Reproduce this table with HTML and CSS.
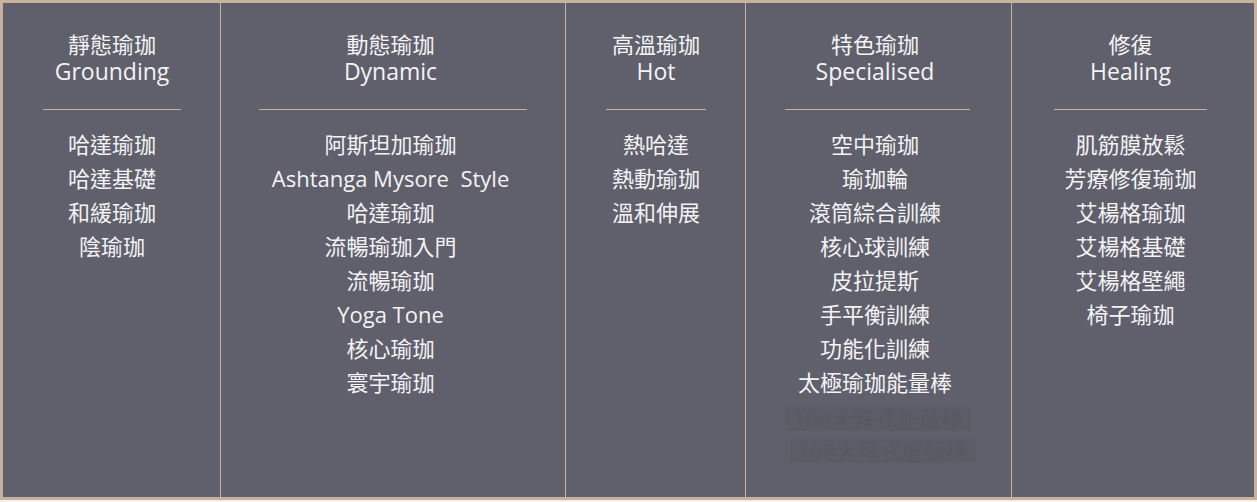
FILE: index.html
```html
<!DOCTYPE html>
<html lang="zh-Hant">
<head>
<meta charset="utf-8">
<link rel="stylesheet" href="styles.css">
</head>
<body>
<div class="table">
  <div class="col c1">
    <div class="head"><div class="zh">靜態瑜珈</div><div class="en">Grounding</div></div>
    <div class="rule"></div>
    <ul class="list">
      <li>哈達瑜珈</li><li>哈達基礎</li><li>和緩瑜珈</li><li>陰瑜珈</li>
    </ul>
  </div>
  <div class="col c2">
    <div class="head"><div class="zh">動態瑜珈</div><div class="en">Dynamic</div></div>
    <div class="rule"></div>
    <ul class="list">
      <li>阿斯坦加瑜珈</li><li>Ashtanga Mysore&nbsp; Style</li><li>哈達瑜珈</li><li>流暢瑜珈入門</li><li>流暢瑜珈</li><li>Yoga Tone</li><li>核心瑜珈</li><li>寰宇瑜珈</li>
    </ul>
  </div>
  <div class="col c3">
    <div class="head"><div class="zh">高溫瑜珈</div><div class="en">Hot</div></div>
    <div class="rule"></div>
    <ul class="list">
      <li>熱哈達</li><li>熱動瑜珈</li><li>溫和伸展</li>
    </ul>
  </div>
  <div class="col c4">
    <div class="head"><div class="zh">特色瑜珈</div><div class="en">Specialised</div></div>
    <div class="rule"></div>
    <ul class="list">
      <li>空中瑜珈</li><li>瑜珈輪</li><li>滾筒綜合訓練</li><li>核心球訓練</li><li>皮拉提斯</li><li>手平衡訓練</li><li>功能化訓練</li><li>太極瑜珈能量棒</li>
      <li class="ghost"><span>108大拜式能量棒</span></li>
      <li class="ghost g2"><span>108大拜式能量棒</span></li>
    </ul>
  </div>
  <div class="col c5">
    <div class="head"><div class="zh">修復</div><div class="en">Healing</div></div>
    <div class="rule"></div>
    <ul class="list">
      <li>肌筋膜放鬆</li><li>芳療修復瑜珈</li><li>艾楊格瑜珈</li><li>艾楊格基礎</li><li>艾楊格壁繩</li><li>椅子瑜珈</li>
    </ul>
  </div>
</div>
</body>
</html>
```
FILE: styles.css
```css
html, body {
  margin: 0;
  padding: 0;
  background: #f4efe9;
}
body {
  width: 1257px;
  height: 502px;
  overflow: hidden;
  font-family: "Open Sans", "Noto Sans CJK TC", sans-serif;
  color: #f3f3f5;
}
.table {
  box-sizing: border-box;
  width: 1257px;
  height: 500px;
  border: 3px solid #c7b29d;
  background: #5f606b;
  display: grid;
  grid-template-columns: 218px 345px 180px 266px 1fr;
}
.col {
  border-right: 1px solid #c7b29d;
  padding: 28px 39px 0 40px;
  text-align: center;
  min-width: 0;
}
.col.c2 {
  padding-left: 38px;
  padding-right: 38px;
}
.col.c4 {
  padding-left: 39px;
  padding-right: 41px;
}
.col.c2 .head,
.col.c2 .list > li:not(.ghost),
.col.c4 .head,
.col.c4 .list > li:not(.ghost) {
  padding-right: 5px;
}
.col.c5 {
  border-right: none;
  padding-left: 42px;
  padding-right: 47px;
}
.head {
  font-size: 22px;
  line-height: 27px;
}
.head .en {
  font-size: 23px;
}
.rule {
  height: 1px;
  background: #c7b29d;
  margin: 24px 0 17px;
}
.list {
  list-style: none;
  margin: 0;
  padding: 0;
  font-size: 22px;
  line-height: 34px;
}
.list li {
  white-space: nowrap;
}
.ghost {
  color: #585963;
  line-height: 24px;
  margin-top: 8px;
}
.ghost span {
  display: inline-block;
  background: #5b5c66;
  padding: 0 8px;
}
.ghost.g2 {
  margin-top: 8px;
}
.ghost.g2 span {
  transform: translateX(5px);
}
```
